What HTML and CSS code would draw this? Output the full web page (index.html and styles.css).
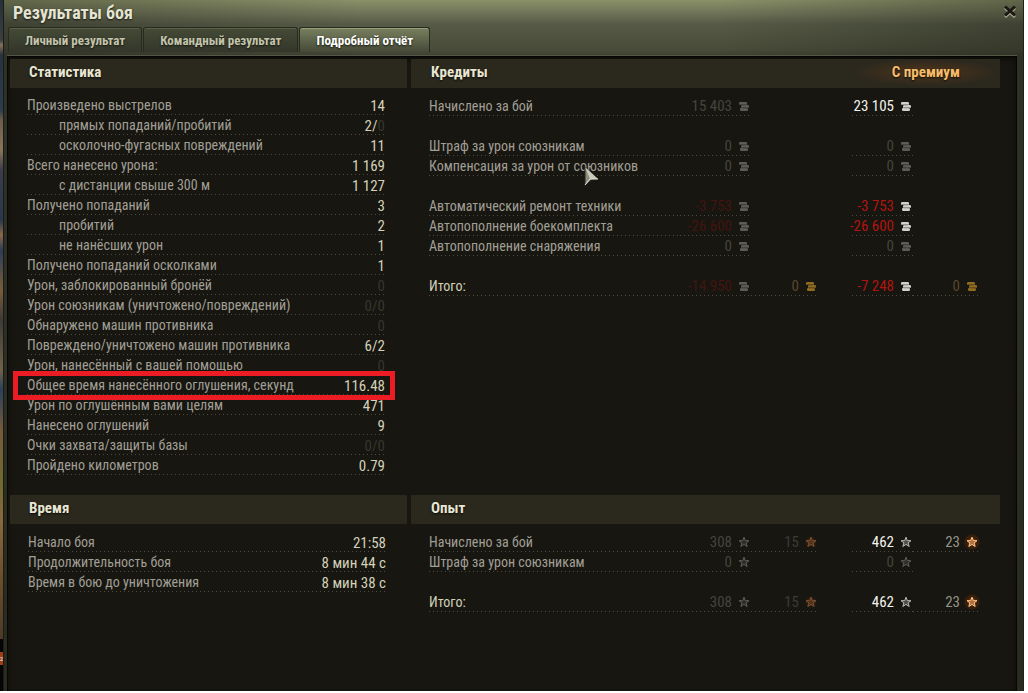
FILE: index.html
```html
<!DOCTYPE html>
<html lang="ru">
<head>
  <meta charset="UTF-8">
  <title>Результаты боя</title>
  <link rel="stylesheet" href="styles.css">
</head>
<body>
  <svg class="sprite" aria-hidden="true">
    <symbol id="coins" viewBox="0 0 10 9">
      <rect x="0" y="0" width="8" height="3" rx="1.200"/>
      <rect x="2" y="3" width="8" height="3" rx="1.200"/>
      <rect x="1" y="6" width="8" height="3" rx="1.200"/>
      <path d="M1 2.800h6M3 5.800h6M0 4.500h2" stroke="#181610" stroke-opacity=".6" stroke-width=".8" fill="none"/>
    </symbol>
    <symbol id="star" viewBox="0 0 12 12">
      <path d="M6 1.200 7.300 4.600l3.700.1-2.900 2.200 1.100 3.600L6 8.400l-3.200 2.100 1.100-3.600L1 4.700l3.700-.1z" fill="currentColor" fill-opacity=".35" stroke="currentColor" stroke-width="1"/>
    </symbol>
  </svg>

  <div class="screen">
    <div class="backdrop"><span class="badge">2</span></div>
    <div class="window">
      <header class="titlebar">
        <h1>Результаты боя</h1>
        <button class="close" aria-label="Закрыть">
          <svg viewBox="0 0 14 14"><path d="M2 4l10 9M12 4L2 13" stroke="#a3a691"/><path d="M2 2.500l10 9M12 2.500l-10 9" stroke="#1c1915"/></svg>
        </button>
      </header>
      <nav class="tabs">
        <button class="tab">Личный результат</button>
        <button class="tab">Командный результат</button>
        <button class="tab active">Подробный отчёт</button>
      </nav>

      <main class="report">
        <section class="stats">
          <h2>Статистика</h2>
          <table class="list">
            <tr><th>Произведено выстрелов</th><td>14</td></tr>
            <tr class="sub"><th>прямых попаданий/пробитий</th><td>2/<span class="zero">0</span></td></tr>
            <tr class="sub"><th>осколочно-фугасных повреждений</th><td>11</td></tr>
            <tr><th>Всего нанесено урона:</th><td>1 169</td></tr>
            <tr class="sub"><th>с дистанции свыше 300 м</th><td>1 127</td></tr>
            <tr><th>Получено попаданий</th><td>3</td></tr>
            <tr class="sub"><th>пробитий</th><td>2</td></tr>
            <tr class="sub"><th>не нанёсших урон</th><td>1</td></tr>
            <tr><th>Получено попаданий осколками</th><td>1</td></tr>
            <tr><th>Урон, заблокированный бронёй</th><td class="zero">0</td></tr>
            <tr><th>Урон союзникам (уничтожено/повреждений)</th><td class="zero">0/0</td></tr>
            <tr><th>Обнаружено машин противника</th><td class="zero">0</td></tr>
            <tr><th>Повреждено/уничтожено машин противника</th><td>6/2</td></tr>
            <tr><th>Урон, нанесённый с вашей помощью</th><td class="zero">0</td></tr>
            <tr class="marked"><th>Общее время нанесённого оглушения, секунд</th><td>116.48</td></tr>
            <tr><th>Урон по оглушённым вами целям</th><td>471</td></tr>
            <tr><th>Нанесено оглушений</th><td>9</td></tr>
            <tr><th>Очки захвата/защиты базы</th><td class="zero">0/0</td></tr>
            <tr><th>Пройдено километров</th><td>0.79</td></tr>
          </table>
        </section>

        <section class="credits">
          <h2>Кредиты <span class="premium">С премиум</span></h2>
          <table class="money">
            <colgroup><col><col class="c1"><col class="c2"><col class="gap"><col class="c3"><col class="c4"></colgroup>
            <tr>
              <th>Начислено за бой</th>
              <td class="dim"><span>15 403<svg><use href="#coins"/></svg></span></td><td></td><td></td>
              <td class="bright"><span>23 105<svg><use href="#coins"/></svg></span></td><td></td>
            </tr>
            <tr class="blank"><td colspan="6"></td></tr>
            <tr>
              <th>Штраф за урон союзникам</th>
              <td class="dim"><span>0<svg><use href="#coins"/></svg></span></td><td></td><td></td>
              <td class="dim"><span>0<svg><use href="#coins"/></svg></span></td><td></td>
            </tr>
            <tr>
              <th class="hovered">Компенсация за урон от союзников
                <svg class="cursor" viewBox="0 0 16 22"><path d="M1 1 14 13 7 14 1 20z" fill="#8c8d80" stroke="#25241d"/><path d="M1 1 14 13 6 13z" fill="#c9cab8"/><path d="M1 19 6 13l8 0" fill="none" stroke="#e4e4d6"/></svg>
              </th>
              <td class="dim"><span>0<svg><use href="#coins"/></svg></span></td><td></td><td></td>
              <td class="dim"><span>0<svg><use href="#coins"/></svg></span></td><td></td>
            </tr>
            <tr class="blank"><td colspan="6"></td></tr>
            <tr>
              <th>Автоматический ремонт техники</th>
              <td class="dim loss"><span>-3 753<svg><use href="#coins"/></svg></span></td><td></td><td></td>
              <td class="loss"><span>-3 753<svg><use href="#coins"/></svg></span></td><td></td>
            </tr>
            <tr>
              <th>Автопополнение боекомплекта</th>
              <td class="dim loss"><span>-26 600<svg><use href="#coins"/></svg></span></td><td></td><td></td>
              <td class="loss"><span>-26 600<svg><use href="#coins"/></svg></span></td><td></td>
            </tr>
            <tr>
              <th>Автопополнение снаряжения</th>
              <td class="dim"><span>0<svg><use href="#coins"/></svg></span></td><td></td><td></td>
              <td class="dim"><span>0<svg><use href="#coins"/></svg></span></td><td></td>
            </tr>
            <tr class="blank"><td colspan="6"></td></tr>
            <tr class="total">
              <th>Итого:</th>
              <td class="dim loss"><span>-14 950<svg><use href="#coins"/></svg></span></td>
              <td class="gold"><span>0<svg><use href="#coins"/></svg></span></td><td></td>
              <td class="loss"><span>-7 248<svg><use href="#coins"/></svg></span></td>
              <td class="gold"><span>0<svg><use href="#coins"/></svg></span></td>
            </tr>
          </table>
        </section>

        <section class="time">
          <h2>Время</h2>
          <table class="list">
            <tr><th>Начало боя</th><td>21:58</td></tr>
            <tr><th>Продолжительность боя</th><td>8 мин 44 с</td></tr>
            <tr><th>Время в бою до уничтожения</th><td>8 мин 38 с</td></tr>
          </table>
        </section>

        <section class="exp">
          <h2>Опыт</h2>
          <table class="money">
            <colgroup><col><col class="c1"><col class="c2"><col class="gap"><col class="c3"><col class="c4"></colgroup>
            <tr>
              <th>Начислено за бой</th>
              <td class="dim"><span>308<svg class="star"><use href="#star"/></svg></span></td>
              <td class="dim free"><span>15<svg class="star"><use href="#star"/></svg></span></td><td></td>
              <td class="bright"><span>462<svg class="star"><use href="#star"/></svg></span></td>
              <td class="free"><span>23<svg class="star"><use href="#star"/></svg></span></td>
            </tr>
            <tr>
              <th>Штраф за урон союзникам</th>
              <td class="dim"><span>0<svg class="star"><use href="#star"/></svg></span></td><td></td><td></td>
              <td class="dim"><span>0<svg class="star"><use href="#star"/></svg></span></td><td></td>
            </tr>
            <tr class="blank"><td colspan="6"></td></tr>
            <tr class="total">
              <th>Итого:</th>
              <td class="dim"><span>308<svg class="star"><use href="#star"/></svg></span></td>
              <td class="dim free"><span>15<svg class="star"><use href="#star"/></svg></span></td><td></td>
              <td class="bright"><span>462<svg class="star"><use href="#star"/></svg></span></td>
              <td class="free"><span>23<svg class="star"><use href="#star"/></svg></span></td>
            </tr>
          </table>
        </section>
      </main>
    </div>
  </div>
</body>
</html>
```
FILE: styles.css
```css
* {
  box-sizing: border-box;
}
body {
  margin: 0;
  padding: 0 4px 2px 0;
  background: #fff;
  font-family: "Roboto Condensed", "Liberation Sans Narrow", "Liberation Sans", sans-serif;
  font-size: 15px;
  line-height: 18px;
  color: #a09f96;
}
.sprite {
  display: none;
}
.screen {
  display: flex;
  min-height: calc(100vh - 2px);
}
.backdrop {
  width: 3px;
  overflow: hidden;
  padding-top: 652px;
  background: linear-gradient(#25303a 0, #3a3f40 40px, #83705a 45px, #26323e 55px, #2b3d4e 110px, #6b5c4b 120px, #8b7558 150px, #3b3c4a 170px, #28384d 220px, #8a6746 235px, #2b3d58 250px, #7a5c3b 290px, #3d3a38 320px, #6f6246 370px, #29415a 390px, #775a3b 430px, #6d6a2c 480px, #89683c 520px, #6b4d2b 580px, #4c3a26 639px, #050505 639px);
}
.badge {
  display: block;
  height: 13px;
  background: #a13c14;
  color: #fff;
  font-size: 6px;
  line-height: 13px;
}
.window {
  flex: 1;
  display: flex;
  flex-direction: column;
  padding: 0 6px 0 3px;
  border-right: 1px solid #20221a;
  border-left: 1px solid #1b1c16;
  background:
    linear-gradient(90deg, rgba(20, 22, 14, 0.35), transparent 35%, transparent 70%, rgba(20, 22, 14, 0.35)),
    linear-gradient(#8a9168 0, #71765a 12px, #565a46 24px, #484b39 50px, #3d4032 56px, #34362b 100%);
}
.titlebar {
  display: flex;
  justify-content: space-between;
  height: 27px;
}
h1 {
  margin: 4px 0 0 6px;
  font-size: 18px;
  line-height: 18px;
  color: #e4e4d2;
  text-shadow: 0 1px 2px #14150f;
}
.close {
  width: 14px;
  height: 14px;
  margin-top: 4px;
  padding: 0;
  border: 0;
  background: none;
}
.close svg {
  display: block;
  width: 14px;
  height: 14px;
  stroke-width: 3;
}
.tabs {
  display: flex;
  gap: 1px;
  height: 29px;
  border-bottom: 1px solid #545743;
  padding: 0 0 3px 1px;
}
.tab {
  padding: 2px 16px 0;
  border: 1px solid #272a1e;
  border-bottom: 0;
  border-radius: 3px 3px 0 0;
  background: linear-gradient(#454a36, #33362a);
  box-shadow: inset 0 1px 0 #5a5f49;
  color: #c3c4ab;
  font: bold 13px/18px "Roboto Condensed", "Liberation Sans Narrow", "Liberation Sans", sans-serif;
  text-shadow: 0 1px 2px #14150f;
}
.tab.active {
  background: linear-gradient(#78805f, #454937);
  box-shadow: inset 0 1px 0 #969c7c;
  color: #fff;
}
.report {
  flex: 1;
  display: grid;
  grid-template-columns: 397fr 589fr;
  grid-template-rows: 436px 1fr;
  column-gap: 4px;
  padding: 2px 16px 0 2px;
  border: 1px solid #060605;
  border-bottom: 0;
  background: #181610;
  box-shadow: inset 0 2px 4px #0a0a07;
}
h2 {
  display: flex;
  justify-content: space-between;
  margin: 0;
  padding: 0 0 2px 19px;
  background: #2b281e;
  font-size: 15px;
  line-height: 27px;
  color: #e9e6d3;
  text-shadow: 0 1px 2px #0b0a07;
}
.credits h2,
.exp h2 {
  padding-left: 20px;
}
.premium {
  padding: 0 40px;
  background: radial-gradient(closest-side, #50351a, transparent);
  color: #f7bd6a;
}
table {
  border-collapse: collapse;
}
tr {
  height: 20px;
}
th {
  padding: 0;
  font-size: 14px;
  font-weight: normal;
  text-align: left;
  white-space: nowrap;
}
td {
  padding: 0;
  text-align: right;
  white-space: nowrap;
}

/* left column */
.list {
  width: calc(100% - 39px);
  margin: 7px 0 0 17px;
}
.time .list {
  margin: 8px 0 0 18px;
}
.list tr,
.money th,
.money td:not(:empty) {
  background: repeating-linear-gradient(90deg, #4c4a41 0, #4c4a41 1px, transparent 1px, transparent 4px) 0 100% / 100% 1px no-repeat;
}
.list td {
  padding-top: 2px;
  color: #d3d1b9;
}
.sub th {
  padding-left: 32px;
}
.list .zero {
  color: #37372f;
}
.marked {
  position: relative;
}
.marked::after {
  content: "";
  position: absolute;
  inset: -4px -10px -5px -14px;
  border: 5px solid #ec1c24;
}

/* right column */
.money {
  table-layout: fixed;
  width: calc(100% - 39px);
  margin: 8px 0 0 18px;
}
.c1 {
  width: 71px;
}
.c2 {
  width: 67px;
}
.gap {
  width: 34px;
}
.c3 {
  width: 61px;
}
.c4 {
  width: 66px;
}
.money td span {
  display: flex;
  justify-content: flex-end;
  align-items: center;
  gap: 7px;
  padding-right: 2px;
}
.money svg {
  flex: none;
  width: 10px;
  height: 9px;
  color: #d2d2cc;
  fill: currentColor;
}
.money svg.star {
  width: 12px;
  height: 12px;
  margin: 0 -1px;
  color: #b9b9b3;
}
.total th {
  color: #d3d1b9;
}
.money .dim {
  color: #45453f;
}
.money .dim svg {
  color: #5d5d57;
}
.money .bright {
  color: #f2f2ec;
}
.money .loss {
  color: #b01410;
}
.money .dim.loss {
  color: #431510;
}
.money .gold {
  color: #57482c;
}
.money .gold svg {
  color: #8f6c20;
}
.money .free {
  color: #94948a;
}
.money .dim.free {
  color: #3c3b36;
}
.money .free svg {
  color: #ffc489;
  border-radius: 6px;
  background: radial-gradient(#a84a0e, transparent 75%);
  box-shadow: 0 0 3px #8a3a0a;
}
.money .dim.free svg {
  color: #7a5135;
  background: radial-gradient(#4a2710, transparent 75%);
  box-shadow: none;
}
.money .blank td {
  background: none;
}
.hovered {
  position: relative;
}
.money .cursor {
  position: absolute;
  left: 155px;
  top: 10px;
  width: 16px;
  height: 22px;
}
```
